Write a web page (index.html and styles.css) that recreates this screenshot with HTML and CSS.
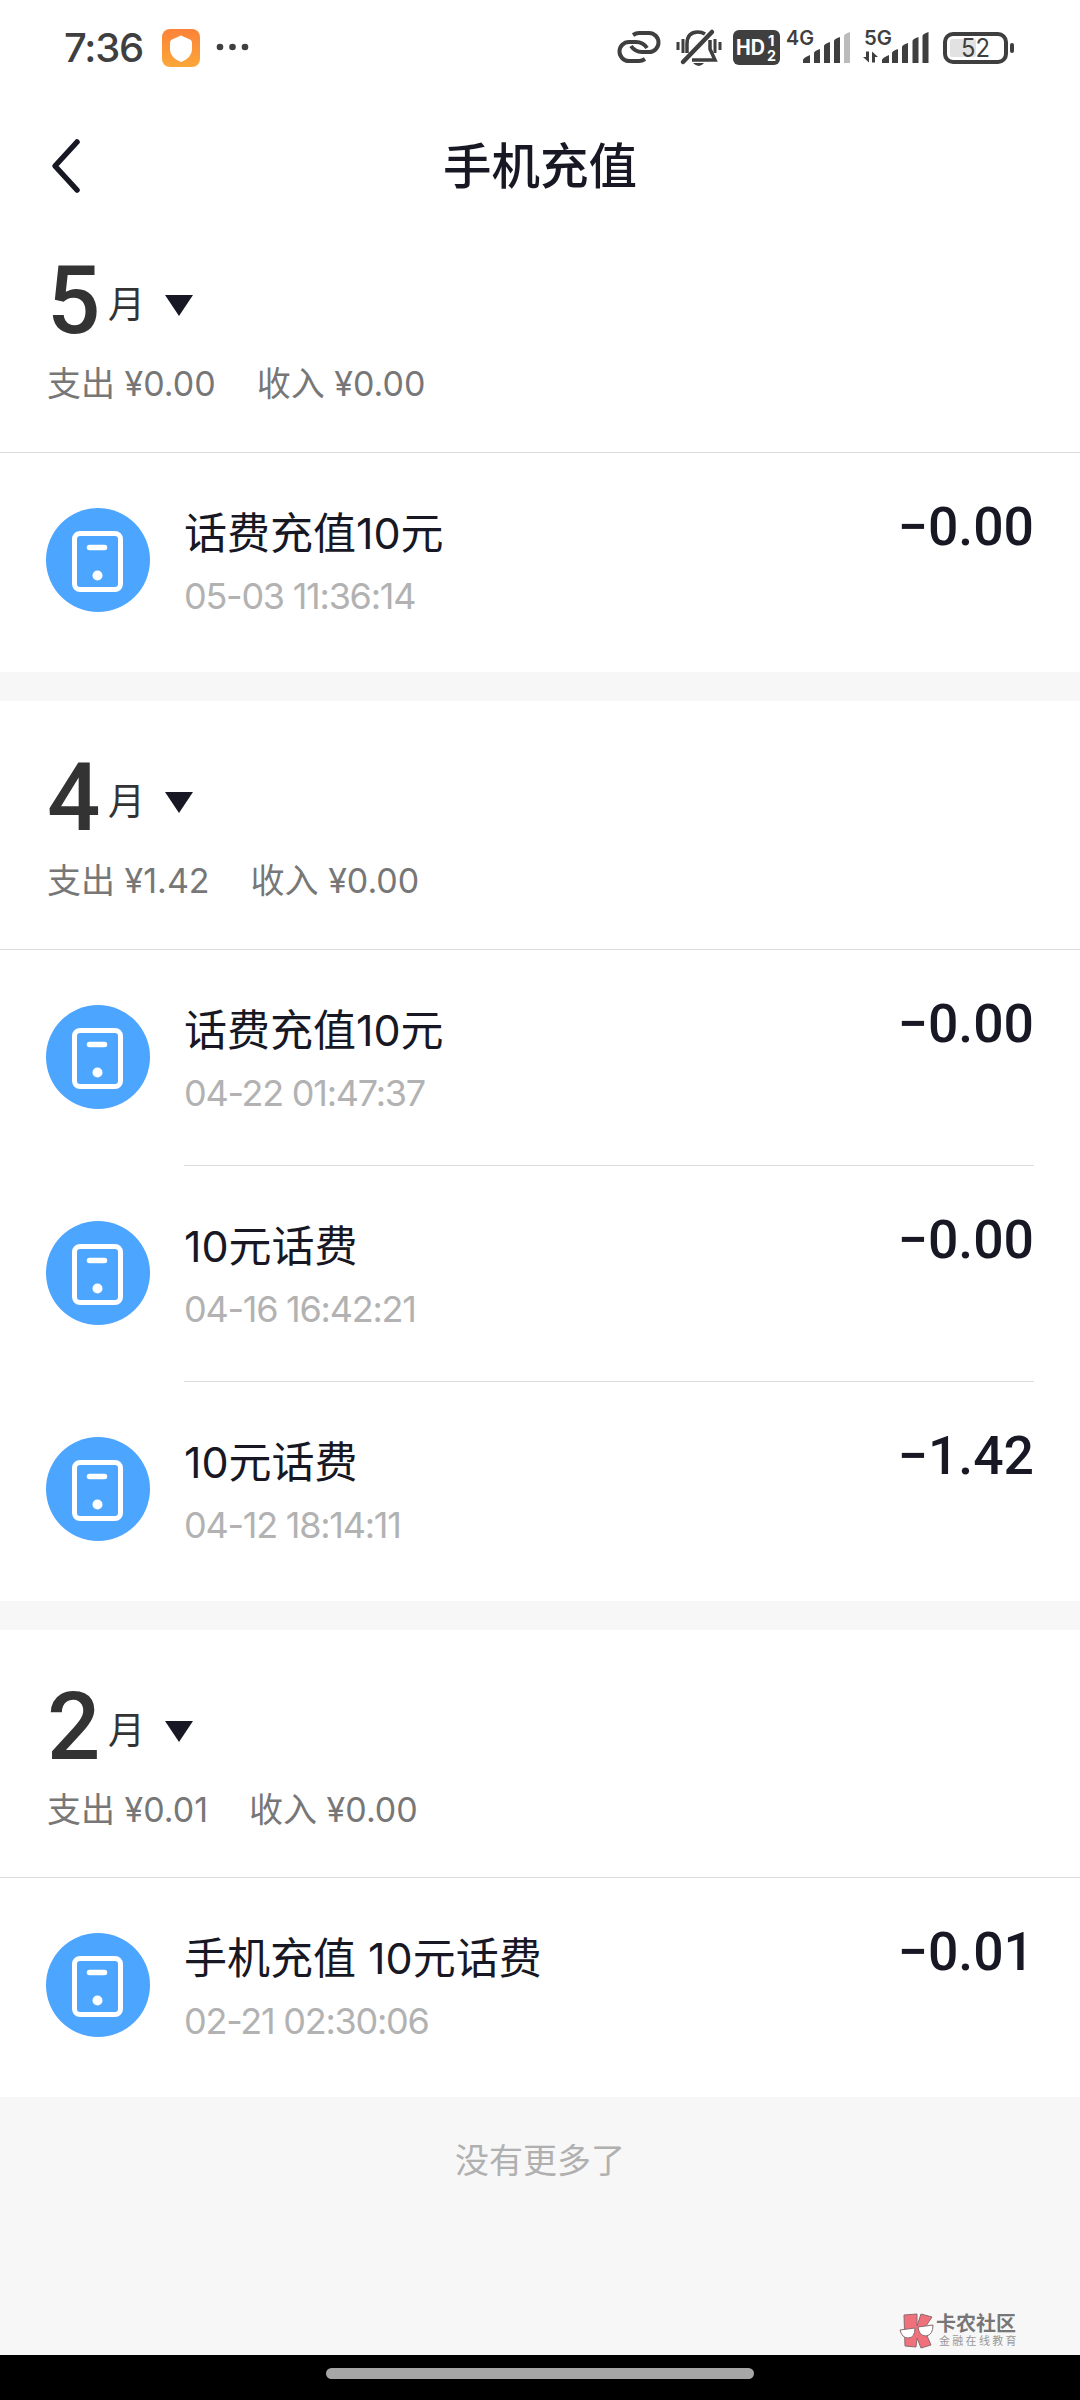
FILE: index.html
```html
<!DOCTYPE html>
<html lang="zh-CN">
<head>
  <meta charset="UTF-8">
  <title>手机充值</title>
  <meta name="viewport" content="width=device-width, initial-scale=1.0">
  <link rel="stylesheet" href="styles.css">
</head>
<body>
  <!-- shared phone icon -->
  <svg class="defs" width="0" height="0">
    <symbol id="phone" viewBox="0 0 104 104">
      <circle cx="52" cy="52" r="52" fill="#4ca5ff"/>
      <rect x="28.5" y="25.5" width="46" height="56" rx="5.5" fill="none" stroke="#fff" stroke-width="5"/>
      <path d="M43.5 39.5h15" stroke="#fff" stroke-width="5.5" stroke-linecap="round"/>
      <circle cx="51.5" cy="67.5" r="5" fill="#fff"/>
    </symbol>
  </svg>

  <div class="status">
    <span class="time">7:36</span>
    <svg class="shield" width="38" height="38" viewBox="0 0 38 38">
      <defs>
        <linearGradient id="orange" x1="0" y1="0" x2="0" y2="1">
          <stop offset="0" stop-color="#fb8239"/>
          <stop offset="1" stop-color="#fba738"/>
        </linearGradient>
      </defs>
      <rect width="38" height="38" rx="8" fill="url(#orange)"/>
      <path d="M19 6.5l9 4q2 1 2 3v7q0 8-11 12.5Q8 28.5 8 20.5v-7q0-2 2-3z" fill="#fff"/>
    </svg>
    <svg class="dots" width="34" height="8" viewBox="0 0 34 8">
      <circle cx="4" cy="4" r="3.3"/><circle cx="16.5" cy="4" r="3.3"/><circle cx="29" cy="4" r="3.3"/>
    </svg>

    <svg class="link" width="44" height="34" viewBox="0 0 44 34" fill="none" stroke="#3f3f3f" stroke-width="4">
      <path d="M16 5Q19 3 22 3H32A9.5 9.5 0 0 1 32 22H25Q18 22 14 16"/>
      <path d="M28 29Q25 31 22 31H12A9.5 9.5 0 0 1 12 12H19Q26 12 30 18"/>
    </svg>
    <svg class="bell" width="46" height="40" viewBox="0 0 46 40" fill="none" stroke="#3f3f3f" stroke-width="3.5">
      <path d="M11 24V15Q11 3 22 3Q26 3 29 5M34 11V20L39 31H16"/>
      <path d="M7 33L36 3" stroke-width="4.5" stroke-linecap="round"/>
      <path d="M2 13v8M7 10v14M39 10v14M44 13v8" stroke-width="3"/>
      <path d="M17 34h11q-5 6-11 0z" fill="#3f3f3f" stroke="none"/>
    </svg>
    <svg class="hd" width="47" height="35" viewBox="0 0 47 35">
      <rect width="47" height="35" rx="6" fill="#3f3f3f"/>
      <g fill="#fff" font-weight="700">
        <text x="3" y="25" font-size="21" textLength="29" lengthAdjust="spacingAndGlyphs">HD</text>
        <text x="35" y="16" font-size="15">1</text>
        <text x="34" y="31" font-size="15" textLength="9" lengthAdjust="spacingAndGlyphs">2</text>
      </g>
    </svg>
    <svg class="sim1" width="66" height="36" viewBox="0 0 66 36" fill="#3f3f3f">
      <text x="0" y="15.5" font-size="20" font-weight="600" textLength="28" lengthAdjust="spacingAndGlyphs">4G</text>
      <path d="M17 34v-3q0-2 7-5v8zM28 34V24q0-2 6-4v14zM38 34V17q0-2 6-4v21zM48 34V12q0-2 6-4v26z"/>
      <path d="M58 34V7q0-2 6-4v31z" fill="#bbb"/>
    </svg>
    <svg class="sim2" width="66" height="36" viewBox="0 0 66 36" fill="#3f3f3f">
      <text x="1" y="15.5" font-size="20" font-weight="600" textLength="28" lengthAdjust="spacingAndGlyphs">5G</text>
      <path d="M19 34v-3q0-2 7-5v8zM29 34V24q0-2 6-4v14zM39 34V18q0-2 6-4v20zM49.5 34V12q0-2 6-4v26zM59.5 34V7q0-2 6-4v31z"/>
      <path d="M6 22.5v11L0 28h3v-5.5zM9 33.5v-11l6 5.5h-3v5.5z"/>
    </svg>
    <svg class="battery" width="72" height="32" viewBox="0 0 72 32">
      <rect x="2" y="2" width="61" height="28" rx="8" fill="none" stroke="#3f3f3f" stroke-width="4"/>
      <rect x="7" y="7" width="26" height="18" rx="2" fill="#e2e2e2"/>
      <rect x="67" y="11" width="4" height="10" rx="2" fill="#3f3f3f"/>
      <text x="18" y="25" font-size="25" font-weight="400" textLength="29" lengthAdjust="spacingAndGlyphs" fill="#3f3f3f">52</text>
    </svg>
  </div>

  <header class="header">
    <svg class="back" width="32" height="56" viewBox="0 0 32 56">
      <path d="M27 4L5 28L27 52" fill="none" stroke="#181824" stroke-width="5.5" stroke-linecap="round" stroke-linejoin="round"/>
    </svg>
    <h1 class="title">手机充值</h1>
  </header>

  <section class="month">
    <div class="month-head">
      <div class="month-name"><span class="num">5</span><span class="yue">月</span><i class="arrow"></i></div>
      <div class="sums"><span>支出 ¥0.00</span><span>收入 ¥0.00</span></div>
    </div>
    <div class="item">
      <svg class="icon"><use href="#phone"/></svg>
      <div class="info">
        <div class="name">话费充值10元</div>
        <div class="date">05-03 11:36:14</div>
      </div>
      <div class="amount">−0.00</div>
    </div>
  </section>

  <section class="month">
    <div class="month-head">
      <div class="month-name"><span class="num">4</span><span class="yue">月</span><i class="arrow"></i></div>
      <div class="sums"><span>支出 ¥1.42</span><span>收入 ¥0.00</span></div>
    </div>
    <div class="item">
      <svg class="icon"><use href="#phone"/></svg>
      <div class="info">
        <div class="name">话费充值10元</div>
        <div class="date">04-22 01:47:37</div>
      </div>
      <div class="amount">−0.00</div>
    </div>
    <div class="item">
      <svg class="icon"><use href="#phone"/></svg>
      <div class="info">
        <div class="name">10元话费</div>
        <div class="date">04-16 16:42:21</div>
      </div>
      <div class="amount">−0.00</div>
    </div>
    <div class="item">
      <svg class="icon"><use href="#phone"/></svg>
      <div class="info">
        <div class="name">10元话费</div>
        <div class="date">04-12 18:14:11</div>
      </div>
      <div class="amount">−1.42</div>
    </div>
  </section>

  <section class="month">
    <div class="month-head">
      <div class="month-name"><span class="num">2</span><span class="yue">月</span><i class="arrow"></i></div>
      <div class="sums"><span>支出 ¥0.01</span><span>收入 ¥0.00</span></div>
    </div>
    <div class="item">
      <svg class="icon"><use href="#phone"/></svg>
      <div class="info">
        <div class="name">手机充值 10元话费</div>
        <div class="date">02-21 02:30:06</div>
      </div>
      <div class="amount">−0.01</div>
    </div>
  </section>

  <footer class="footer">
    <p class="no-more">没有更多了</p>
    <div class="brand">
      <svg class="brand-logo" width="36" height="36" viewBox="0 0 36 36" stroke="#8b6b70" stroke-width="1">
        <path d="M5 2L18 1L18 13L22 1L33 4L25 16L32 32L22 35L18 25L17 34L6 33z" fill="#f0717b"/>
        <path d="M1 17L16 15Q16 25 9 25Q3 25 1 17zM19 14L34 12Q34 22 27 23Q20 23 19 14z" fill="#fff"/>
      </svg>
      <div class="brand-text">
        <div class="brand-name">卡农社区</div>
        <div class="brand-sub">金融在线教育</div>
      </div>
    </div>
  </footer>

  <div class="navbar"><div class="pill"></div></div>
</body>
</html>
```

FILE: styles.css
```css
* { box-sizing: border-box; }
body {
  margin: 0;
  width: 1080px;
  height: 2400px;
  display: flex;
  flex-direction: column;
  overflow: hidden;
  background: #f7f7f7;
  color: #181824;
  font-family: Inter, "Noto Sans CJK SC", sans-serif;
}
svg { display: block; flex: none; overflow: visible; }
.defs { position: absolute; }

/* status bar */
.status {
  display: flex;
  align-items: flex-start;
  height: 96px;
  padding: 29px 64px 0 64px;
  background: #fff;
}
.time {
  width: 98px;
  margin-top: -5px;
  font-size: 40px;
  line-height: 48px;
  font-weight: 450;
  letter-spacing: -1.2px;
  color: #3f3f3f;
}
.dots { margin: 14px 0 0 16px; fill: #3f3f3f; }
.link { margin: 1px 0 0 367px; }
.bell { margin-left: 15px; }
.hd { margin: 1px 0 0 11px; }
.sim1 { margin-left: 6px; }
.sim2 { margin-left: 11px; }
.battery { margin: 3px 0 0 14px; }

.header {
  display: grid;
  grid-template-columns: 100px 1fr 100px;
  align-items: center;
  height: 108px;
  padding-top: 32px;
  background: #fff;
}
.back { margin-left: 50px; }
.title {
  margin: 1px 0 0;
  text-align: center;
  font-size: 48.5px;
  line-height: 60px;
  font-weight: 500;
}

/* one month of records */
.month { background: #fff; margin-bottom: 29px; }
.month:last-of-type { margin-bottom: 0; }
.month-head {
  height: 249px;
  margin-bottom: -1px;
  padding: 48px 47px 0;
  border-bottom: 1px solid #dcdcdc;
}
.month:last-of-type .month-head { height: 248px; }
.month-name { display: flex; height: 100px; color: #333; }
.num {
  width: 61px;
  margin-top: -1px;
  font-family: Roboto, sans-serif;
  font-size: 94px;
  line-height: 100px;
  font-weight: 500;
}
.yue { width: 57px; margin-top: 23px; font-size: 37px; line-height: 60px; }
.arrow {
  height: 0;
  margin-top: 43px;
  border: 14px solid transparent;
  border-top: 21px solid #181824;
  border-bottom: 0;
}
.sums {
  display: flex;
  gap: 41px;
  margin-top: 7px;
  font-size: 34px;
  line-height: 50px;
  color: #777;
}

.item {
  display: flex;
  height: 216px;
  padding: 56px 46px 0;
}
.item:last-child { height: 220px; }
.icon { width: 104px; height: 104px; }
.info { width: 500px; margin: -5px 0 0 34px; }
.name { font-size: 43px; line-height: 60px; }
.date {
  margin-top: 11px;
  font-size: 36px;
  line-height: 44px;
  letter-spacing: -1.25px;
  color: #b2b2b2;
}
.amount {
  flex: 1;
  margin-top: -11px;
  text-align: right;
  font-family: Roboto, sans-serif;
  font-size: 53.5px;
  line-height: 60px;
  font-weight: 500;
}
.item + .item { position: relative; }
.item + .item::before {
  content: "";
  position: absolute;
  left: 184px;
  right: 46px;
  top: 0;
  height: 1px;
  background: #dcdcdc;
}

.footer { flex: 1; display: flex; flex-direction: column; justify-content: space-between; }
.no-more { margin: 39px 0 0; text-align: center; font-size: 34px; line-height: 50px; color: #b0b0b0; }
.brand { display: flex; gap: 1px; margin: 0 0 6px 899px; }
.brand-name { font-size: 20px; line-height: 22px; font-weight: 700; color: #777; }
.brand-sub { margin-left: 3px; font-size: 11px; line-height: 13px; letter-spacing: 2.3px; color: #999; white-space: nowrap; }

.navbar { height: 45px; background: #000; padding-top: 13px; }
.pill { width: 428px; height: 11px; margin: 0 auto; border-radius: 6px; background: #a6a6a6; }
```
